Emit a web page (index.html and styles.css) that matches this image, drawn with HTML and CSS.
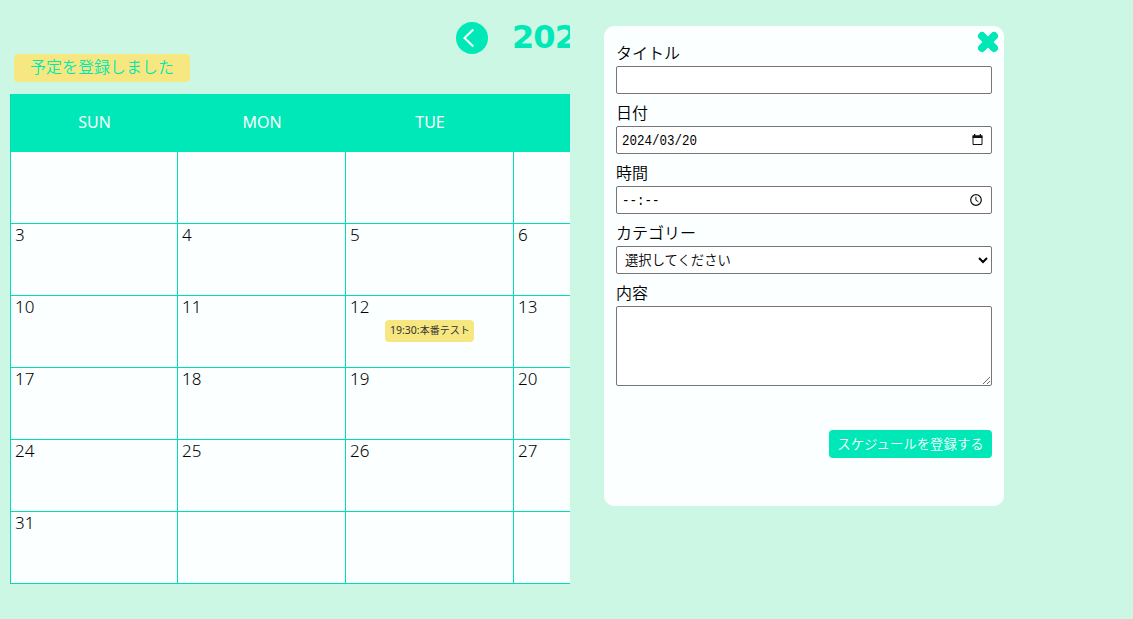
FILE: index.html
```html
<!DOCTYPE html>
<html lang="ja">
<head>
<meta charset="utf-8">
<title>カレンダー</title>
<link rel="stylesheet" href="styles.css">
</head>
<body>
<main class="page">
  <section class="calendar">
    <header class="calendar-head">
      <button class="prev" aria-label="前の月"><svg width="32" height="32" viewBox="0 0 32 32"><circle cx="16" cy="16" r="16"/><path d="M17.3 7.5 8.5 16l8.8 8.5"/></svg></button>
      <h1 class="month">202</h1>
    </header>
    <p class="notice">予定を登録しました</p>
    <div class="grid">
      <div class="day">SUN</div><div class="day">MON</div><div class="day">TUE</div><div class="day"></div>
      <div class="cell"></div><div class="cell"></div><div class="cell"></div><div class="cell"></div>
      <div class="cell">3</div><div class="cell">4</div><div class="cell">5</div><div class="cell">6</div>
      <div class="cell">10</div><div class="cell">11</div><div class="cell">12<span class="event"><span class="event-time">19:30:</span>本番テスト</span></div><div class="cell">13</div>
      <div class="cell">17</div><div class="cell">18</div><div class="cell">19</div><div class="cell">20</div>
      <div class="cell">24</div><div class="cell">25</div><div class="cell">26</div><div class="cell">27</div>
      <div class="cell">31</div><div class="cell"></div><div class="cell"></div><div class="cell"></div>
    </div>
  </section>
  <form class="panel">
    <button type="button" class="close" aria-label="閉じる"><svg width="22" height="22" viewBox="0 0 22 22"><path d="M5 5l12 12M17 5 5 17"/></svg></button>
    <label class="row"><span class="label">タイトル</span><input class="field" type="text"></label>
    <label class="row"><span class="label">日付</span>
      <span class="field"><span class="value">2024/03/20</span><svg class="date-icon" width="11" height="12" viewBox="0 0 11 12"><path d="M1 2.5h9v8H1z" fill="none" stroke="#111"/><path d="M.5 1.2h10v2.7H.5zM2 0h1.3v2H2zM7.7 0H9v2H7.7z" fill="#111"/></svg></span></label>
    <label class="row"><span class="label">時間</span>
      <span class="field"><span class="value">--:--</span><svg class="time-icon" width="12" height="12" viewBox="0 0 12 12" fill="none" stroke="#111"><circle cx="6" cy="6" r="5.3" stroke-width="1.2"/><path d="M5.9 2.8v3.4l2.5 1.6"/></svg></span></label>
    <label class="row"><span class="label">カテゴリー</span><select class="field select"><option>選択してください</option></select></label>
    <label class="row"><span class="label">内容</span><textarea class="field area"></textarea></label>
    <button type="button" class="submit">スケジュールを登録する</button>
  </form>
</main>
</body>
</html>
```
FILE: styles.css
```css
* { box-sizing: border-box; }
body {
  margin: 0;
  background: #cbf7e4;
  color: #000;
  font-family: "Noto Sans", "Noto Sans CJK JP", sans-serif;
  font-size: 16px;
}
button { border: 0; padding: 0; background: none; font-family: inherit; }
.page { display: flex; align-items: flex-start; height: 619px; overflow: hidden; }
.calendar { width: 560px; margin-left: 10px; overflow: hidden; }
.calendar-head { display: flex; height: 54px; padding: 22px 0 0 446px; gap: 24px; }
.prev { width: 32px; height: 32px; flex: none; }
.prev svg { display: block; fill: #00e8b7; }
.prev path { fill: none; stroke: #fbffff; stroke-width: 2; }
.month {
  margin: -4px 0 0;
  font: bold 32px/38px "DejaVu Sans", sans-serif;
  letter-spacing: -0.9px;
  color: #00e8b7;
}
.notice {
  width: 176px;
  height: 28px;
  margin: 0 0 12px 4px;
  border-radius: 4px;
  background: #f7e781;
  color: #00e8b7;
  font-family: "Noto Sans CJK JP", sans-serif;
  font-weight: 350;
  line-height: 24px;
  text-align: center;
}
.grid {
  display: grid;
  grid-template-columns: 167px 168px 168px 168px;
  grid-template-rows: 58px repeat(6, 72px);
  width: 672px;
  height: 490px;
  border-left: 1px solid #00deb2;
  background: #fbffff;
}
.day { background: #00e8b7; color: #fbffff; text-align: center; line-height: 56px; }
.cell {
  border-right: 1px solid #00deb2;
  border-bottom: 1px solid #00deb2;
  padding-left: 4px;
  font-size: 17px;
  font-weight: 350;
  line-height: 22px;
}
.event {
  display: block;
  width: 89px;
  height: 22px;
  margin: 2px 0 0 35px;
  padding-left: 5px;
  border-radius: 4px;
  background: #f7e781;
  color: #333;
  font: 10px/20px "Noto Sans CJK JP", sans-serif;
  white-space: nowrap;
}
.event-time { font-family: "Noto Sans", sans-serif; font-size: 10.5px; }
.panel {
  position: relative;
  display: flex;
  flex-direction: column;
  width: 400px;
  height: 480px;
  margin: 26px 0 0 34px;
  padding: 12px 12px 0;
  border-radius: 10px;
  background: #fbffff;
}
.close { position: absolute; top: 5px; right: 5px; width: 22px; height: 22px; }
.close svg { display: block; }
.close path { stroke: #00e8b7; stroke-width: 8; stroke-linecap: round; }
.row { display: flex; flex-direction: column; margin-bottom: 4px; }
.label { height: 28px; line-height: 28px; font-family: "Noto Sans CJK JP", sans-serif; font-weight: 350; }
.field {
  display: flex;
  align-items: center;
  justify-content: space-between;
  width: 376px;
  height: 28px;
  margin: 0;
  padding: 0 8px 0 5px;
  border: 1px solid #767676;
  border-radius: 2px;
  background: #fff;
  color: #000;
}
.value { padding-top: 1px; font: 12.5px "Liberation Mono", monospace; transform: scaleY(1.2); }
.time-icon { margin-right: 1px; }
.select { padding: 0 0 1px 4px; font: 350 13.33px "Noto Sans CJK JP", sans-serif; }
.area { height: 80px; resize: vertical; }
.submit {
  align-self: flex-end;
  width: 163px;
  height: 28px;
  margin-top: 40px;
  padding-bottom: 2px;
  border-radius: 4px;
  background: #00e8b7;
  color: #fbffff;
  font: 350 13.4px/24px "Noto Sans CJK JP", sans-serif;
}
```
